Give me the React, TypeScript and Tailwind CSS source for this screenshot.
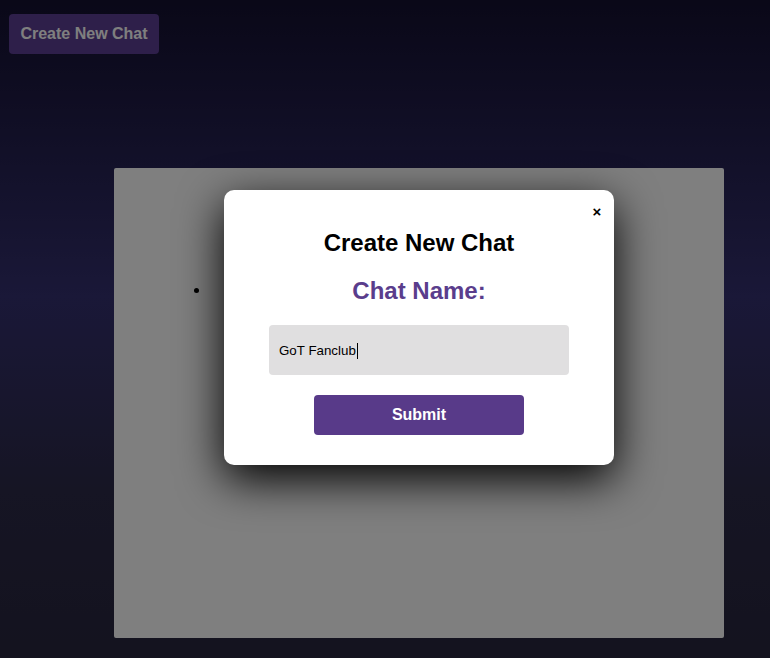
import React from "react";

const font = { fontFamily: '"Liberation Sans", Arial, sans-serif' };

export default function App() {
  return (
    <div
      className="relative h-[658px] w-full overflow-hidden bg-[linear-gradient(180deg,#141030_0%,#343070_45%,#2c2a48_75%,#28263e_100%)]"
      style={font}
    >
      {/* Page */}
      <div className="flex flex-col items-start pl-[9px] pt-[14px]">
        <button className="h-[40px] w-[150px] rounded-[4px] bg-[#5c3e94] text-[16px] font-bold text-white">
          Create New Chat
        </button>
        <div className="ml-[105px] mt-[114px] h-[470px] w-[610px] rounded-[2px] bg-white pl-[96px] pt-[112px]">
          <ul className="list-disc text-[16px] text-black">
            <li className="leading-[20px] text-transparent marker:text-black">&nbsp;</li>
          </ul>
        </div>
      </div>

      {/* Overlay */}
      <div className="absolute inset-0 bg-black/50" />

      {/* Modal */}
      <div className="absolute left-[224px] top-[190px] flex h-[275px] w-[390px] flex-col items-center rounded-[10px] bg-white pt-[39px] shadow-[0_14px_45px_rgba(0,0,0,1)]">
        <button className="absolute right-[11px] top-[11px] flex h-[20px] w-[12px] items-center justify-center text-[15px] font-bold leading-none text-black">
          ×
        </button>
        <h2 className="text-[24px] font-bold leading-[28px] text-black">Create New Chat</h2>
        <h3 className="mt-[20px] text-[24px] font-bold leading-[28px] text-[#5a3d8c]">Chat Name:</h3>
        <div className="mt-[20px] flex h-[50px] w-[300px] items-center rounded-[4px] bg-[#e0dfe0] px-[10px] pt-[2px] text-[13.33px] text-black">
          <span>GoT Fanclub</span>
          <span className="ml-[1px] inline-block h-[16px] w-[1px] bg-black" />
        </div>
        <button className="mt-[20px] h-[40px] w-[210px] rounded-[4px] bg-[#583a89] text-[16px] font-bold text-white">
          Submit
        </button>
      </div>
    </div>
  );
}
